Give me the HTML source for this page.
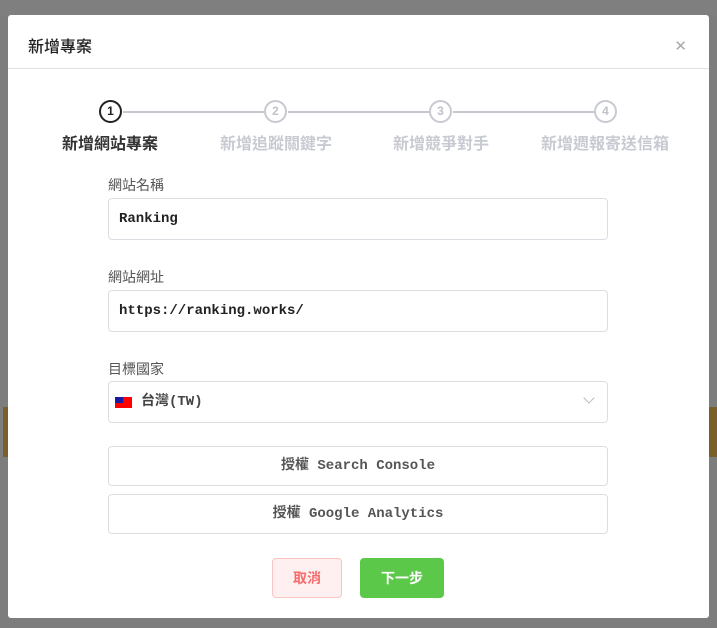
<!DOCTYPE html>
<html><head><meta charset="utf-8"><style>
*{box-sizing:border-box;margin:0;padding:0}
body{width:717px;height:628px;background:#7d7d7d;position:relative;overflow:hidden;font-family:"Liberation Sans","Noto Sans CJK TC",sans-serif}
.bgtop{position:absolute;left:0;top:0;width:717px;height:15px;background:#7f7f7f}
.modal{position:absolute;left:8px;top:15px;width:701px;height:603px;background:#fff;border-radius:3px}
.hd{height:54px;border-bottom:1px solid #e0e0e4;padding:18px 0 0 20px;font-size:16px;color:#222;font-weight:500}
.x{position:absolute;right:22px;top:22px;font-size:15px;color:#aaa;font-weight:300}
.line{position:absolute;top:96px;height:2px;background:#c6c8d0}
.c{position:absolute;width:23px;height:23px;border:2px solid #c8cad2;border-radius:50%;top:85px;text-align:center;font-size:12px;font-weight:bold;line-height:19px;color:#c0c2ca;background:#fff}
.c.a{border-color:#222;color:#222}
.lb{position:absolute;top:115px;font-size:16px;font-weight:bold;color:#c8cad2;width:170px;text-align:center}
.lb.a{color:#333}
.fl{position:absolute;left:100px;font-size:14px;color:#555}
.in{position:absolute;left:100px;width:500px;height:42px;border:1px solid #dcdde3;border-radius:4px;padding-left:10px;font-family:"Liberation Mono","Noto Sans CJK TC",monospace;font-size:14px;line-height:40px;color:#222;font-weight:bold}
.btn{position:absolute;left:100px;width:500px;height:40px;border:1px solid #dcdde3;border-radius:4px;text-align:center;line-height:38px;font-family:"Liberation Mono","Noto Sans CJK TC",monospace;font-size:14px;color:#555;font-weight:bold}
</style></head><body>
<div class="bgtop"></div>
<div style="position:absolute;left:3px;top:407px;width:10px;height:50px;background:#7a6028"></div>
<div style="position:absolute;left:705px;top:407px;width:12px;height:50px;background:#7a6028"></div>
<div class="modal">
<div class="hd">新增專案</div>
<div class="x">✕</div>
<div class="line" style="left:115px;width:150px"></div>
<div class="line" style="left:280px;width:150px"></div>
<div class="line" style="left:445px;width:150px"></div>
<div class="c a" style="left:91px">1</div>
<div class="c" style="left:256px">2</div>
<div class="c" style="left:421px">3</div>
<div class="c" style="left:586px">4</div>
<div class="lb a" style="left:17px">新增網站專案</div>
<div class="lb" style="left:183px">新增追蹤關鍵字</div>
<div class="lb" style="left:348px">新增競爭對手</div>
<div class="lb" style="left:512px">新增週報寄送信箱</div>
<div class="fl" style="top:160px">網站名稱</div>
<div class="in" style="top:183px">Ranking</div>
<div class="fl" style="top:252px">網站網址</div>
<div class="in" style="top:275px">https://ranking.works/</div>
<div class="fl" style="top:344px">目標國家</div>
<div class="in" style="top:366px;font-weight:bold;color:#444;padding-left:32px">台灣(TW)
<div style="position:absolute;left:6px;top:15px;width:17px;height:11px;background:#f00"><div style="width:8px;height:6px;background:#1a1aa0"></div></div>
<div style="position:absolute;right:14px;top:12px;width:8px;height:8px;border-right:1px solid #bbb;border-bottom:1px solid #bbb;transform:rotate(45deg)"></div>
</div>
<div class="btn" style="top:431px">授權 Search Console</div>
<div class="btn" style="top:479px">授權 Google Analytics</div>
<div style="position:absolute;left:264px;top:543px;width:70px;height:40px;border:1px solid #fbc4c4;background:#fef0f0;border-radius:4px;color:#f56c6c;text-align:center;line-height:38px;font-size:14px;font-weight:bold">取消</div>
<div style="position:absolute;left:352px;top:543px;width:84px;height:40px;background:#5cc84a;border-radius:4px;color:#fff;text-align:center;line-height:40px;font-size:14px;font-weight:bold">下一步</div>
</div>
</body></html>
